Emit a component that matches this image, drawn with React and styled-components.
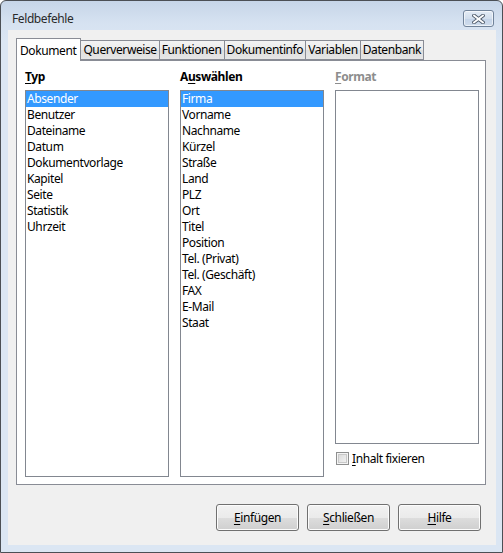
import React from 'react';
import styled, { createGlobalStyle } from 'styled-components';

const Global = createGlobalStyle`
  html, body { margin: 0; padding: 0; background: #ffffff; }
  body { font-family: "Noto Sans", "Segoe UI", sans-serif; font-size: 12px; letter-spacing: -0.4px; color: #000; }
  * { box-sizing: border-box; }
`;

const Window = styled.div`
  width: 503px;
  height: 553px;
  border: 1px solid #4b4f55;
  border-radius: 6px 6px 0 0;
  background: linear-gradient(#c6d5e8 0px, #d6e2f1 22px, #dbe6f3 40px, #dbe6f3 100%);
  display: flex;
  flex-direction: column;
`;

const TitleBar = styled.div`
  height: 29px;
  display: flex;
  align-items: flex-start;
  justify-content: space-between;
  padding: 0 8px 0 11px;
`;

const Title = styled.div`
  margin-top: 10px;
  font-size: 12px;
  line-height: 16px;
  color: #2a2a2a;
`;

const CloseButton = styled.div`
  margin-top: 9px;
  width: 31px;
  height: 17px;
  border: 1px solid #71839a;
  border-radius: 3px;
  background: linear-gradient(#e4ecf6, #d2deed 50%, #c3d3e8 51%, #cfdcec);
  box-shadow: inset 0 0 0 1px rgba(255, 255, 255, 0.6);
  display: flex;
  align-items: center;
  justify-content: center;
`;

const Body = styled.div`
  flex: 1;
  margin: 0 6px 7px 7px;
  background: #f0f0f0;
  padding: 8px 10px 14px 8px;
  display: flex;
  flex-direction: column;
`;

const TabStrip = styled.div`
  display: flex;
  align-items: flex-end;
  height: 22px;
  position: relative;
  z-index: 1;
`;

const Tab = styled.div`
  height: ${p => (p.$active ? '23px' : '20px')};
  margin-bottom: ${p => (p.$active ? '-1px' : '0')};
  margin-left: ${p => (p.$first ? '0' : '-1px')};
  padding: ${p => (p.$active ? '1px 4px 0 3px' : '0 2px 0 2px')};
  border: 1px solid #898c95;
  border-bottom: ${p => (p.$active ? 'none' : '1px solid #898c95')};
  background: ${p => (p.$active ? '#ffffff' : 'linear-gradient(#f3f3f3, #ebebeb 50%, #dedede 51%, #e6e6e6)')};
  display: flex;
  align-items: center;
  line-height: 16px;
  position: relative;
  z-index: ${p => (p.$active ? 2 : 1)};
  white-space: nowrap;
`;

const Panel = styled.div`
  height: 425px;
  border: 1px solid #898c95;
  background: #ffffff;
  padding: 8px 6px 7px 8px;
  display: grid;
  grid-template-columns: 144px 144px 144px;
  column-gap: 11px;
`;

const Column = styled.div`
  display: flex;
  flex-direction: column;
  min-height: 0;
`;

const Label = styled.div`
  height: 16px;
  line-height: 16px;
  font-weight: bold;
  color: ${p => (p.$disabled ? '#8d8d8d' : '#000')};
  margin-bottom: 5px;
  white-space: nowrap;
`;

const Mn = styled.span`
  text-decoration: underline;
  text-underline-offset: 2px;
`;

const ListBox = styled.div`
  flex: 1;
  border: 1px solid #828790;
  background: #fff;
  overflow: hidden;
`;

const Item = styled.div`
  height: 16px;
  line-height: 16px;
  padding: 0 1px;
  white-space: nowrap;
  background: ${p => (p.$selected ? '#3399ff' : 'transparent')};
  color: ${p => (p.$selected ? '#ffffff' : '#000')};
`;

const CheckRow = styled.label`
  display: flex;
  align-items: center;
  height: 13px;
  margin: 8px 0 12px 1px;
  gap: 3px;
  white-space: nowrap;
  line-height: 16px;
`;

const CheckBox = styled.span`
  width: 13px;
  height: 13px;
  border: 1px solid #8e8f8f;
  box-shadow: inset 0 0 0 1px #f4f4f4, inset 0 0 0 2px #c9c9c9;
  background-image: linear-gradient(135deg, #d6d6d6, #f6f6f6);
  flex: none;
`;

const ButtonRow = styled.div`
  margin-top: 19px;
  display: flex;
  justify-content: flex-end;
  gap: 8px;
  padding-right: 5px;
`;

const Button = styled.div`
  width: 83px;
  height: 27px;
  border: 1px solid #707070;
  border-radius: 3px;
  background: linear-gradient(#f2f2f2 0%, #ebebeb 50%, #dddddd 51%, #cfcfcf 100%);
  box-shadow: inset 0 0 0 1px #fcfcfc;
  display: flex;
  align-items: center;
  justify-content: center;
  line-height: 16px;
`;

const typItems = ['Absender', 'Benutzer', 'Dateiname', 'Datum', 'Dokumentvorlage', 'Kapitel', 'Seite', 'Statistik', 'Uhrzeit'];
const selItems = ['Firma', 'Vorname', 'Nachname', 'Kürzel', 'Straße', 'Land', 'PLZ', 'Ort', 'Titel', 'Position', 'Tel. (Privat)', 'Tel. (Geschäft)', 'FAX', 'E-Mail', 'Staat'];
const tabs = ['Dokument', 'Querverweise', 'Funktionen', 'Dokumentinfo', 'Variablen', 'Datenbank'];

export default function App() {
  return (
    <>
      <Global />
      <Window>
        <TitleBar>
          <Title>Feldbefehle</Title>
          <CloseButton>
            <svg width="13" height="10" viewBox="0 0 13 10">
              <path d="M2 1.5 L11 8.5 M11 1.5 L2 8.5" stroke="#4e5a6a" strokeWidth="3.6" strokeLinecap="square" />
              <path d="M2 1.5 L11 8.5 M11 1.5 L2 8.5" stroke="#ffffff" strokeWidth="1.8" strokeLinecap="square" />
            </svg>
          </CloseButton>
        </TitleBar>
        <Body>
          <TabStrip>
            {tabs.map((t, i) => (
              <Tab key={t} $active={i === 0} $first={i === 0}>{t}</Tab>
            ))}
          </TabStrip>
          <Panel>
            <Column>
              <Label><Mn>T</Mn>yp</Label>
              <ListBox>
                {typItems.map((t, i) => <Item key={t} $selected={i === 0}>{t}</Item>)}
              </ListBox>
            </Column>
            <Column>
              <Label>A<Mn>u</Mn>swählen</Label>
              <ListBox>
                {selItems.map((t, i) => <Item key={t} $selected={i === 0}>{t}</Item>)}
              </ListBox>
            </Column>
            <Column>
              <Label $disabled><Mn>F</Mn>ormat</Label>
              <ListBox />
              <CheckRow>
                <CheckBox />
                <span><Mn>I</Mn>nhalt fixieren</span>
              </CheckRow>
            </Column>
          </Panel>
          <ButtonRow>
            <Button><span><Mn>E</Mn>infügen</span></Button>
            <Button><span><Mn>S</Mn>chließen</span></Button>
            <Button><span><Mn>H</Mn>ilfe</span></Button>
          </ButtonRow>
        </Body>
      </Window>
    </>
  );
}
